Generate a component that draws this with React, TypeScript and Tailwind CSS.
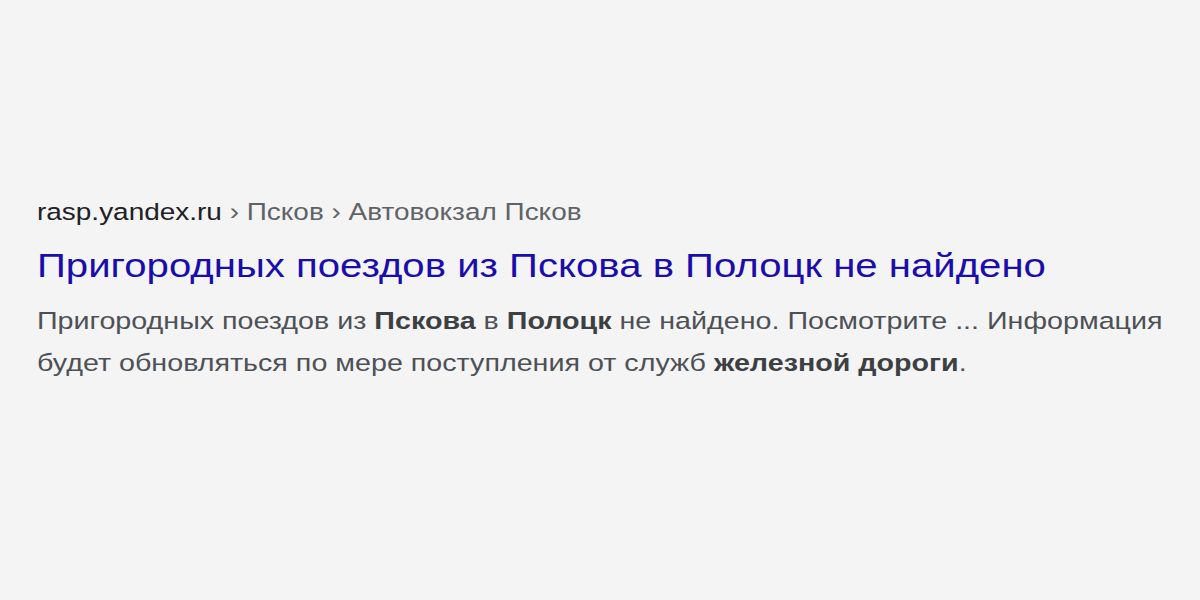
import React from 'react';

const font = { fontFamily: '"Liberation Sans", Arial, sans-serif' };

export default function App() {
  return (
    <div className="w-[1200px] h-[600px] bg-[#f4f4f4] flex flex-col pt-[196px] pl-[37px] overflow-hidden" style={font}>
      {/* the snippet in the picture is stretched wider than it is tall */}
      <div className="origin-left scale-x-[1.18] flex flex-col">
        <div className="text-[23.7px] leading-[32px] text-[#5f6368] whitespace-nowrap">
          <span className="text-[#202124]">rasp.yandex.ru</span> › Псков › Автовокзал Псков
        </div>
        <div className="mt-[15px] text-[34px] leading-[44px] text-[#1a0dab] whitespace-nowrap">
          Пригородных поездов из Пскова в Полоцк не найдено
        </div>
        <div className="mt-[13px] text-[24.3px] leading-[42px] text-[#4d5156]">
          <div className="whitespace-nowrap">
            Пригородных поездов из <b className="text-[#3c4043]">Пскова</b> в <b className="text-[#3c4043]">Полоцк</b> не найдено. Посмотрите ... Информация
          </div>
          <div className="whitespace-nowrap">
            будет обновляться по мере поступления от служб <b className="text-[#3c4043]">железной дороги</b>.
          </div>
        </div>
      </div>
    </div>
  );
}
